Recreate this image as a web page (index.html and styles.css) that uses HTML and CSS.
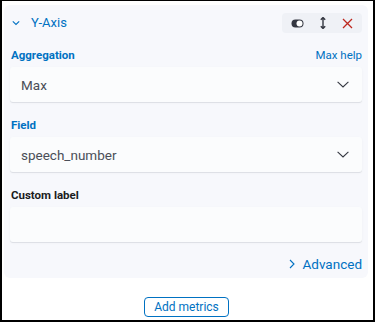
FILE: index.html
```html
<!DOCTYPE html>
<html>
<head>
<meta charset="utf-8">
<link rel="stylesheet" href="styles.css">
</head>
<body>
<div class="frame">
  <div class="panel">
    <div class="header">
      <div class="title">
        <svg class="chev-down" width="8" height="6" viewBox="0 0 8 6"><path d="M0.8 1.3 L4 4.5 L7.2 1.3" fill="none" stroke="#0071c2" stroke-width="1.1"/></svg>
        <span>Y-Axis</span>
      </div>
      <div class="actions">
        <svg width="13" height="9" viewBox="0 0 13 9"><rect x="0.5" y="0.5" width="12" height="8" rx="4" fill="#343741"/><circle cx="8.5" cy="4.5" r="3" fill="#fff"/></svg>
        <svg width="6" height="12" viewBox="0 0 6 12"><path d="M3 0.5 V11.5 M0.8 2.8 L3 0.5 L5.2 2.8 M0.8 9.2 L3 11.5 L5.2 9.2" fill="none" stroke="#343741" stroke-width="1.4"/></svg>
        <svg width="11" height="11" viewBox="0 0 11 11"><path d="M1 1 L10 10 M10 1 L1 10" fill="none" stroke="#bd271e" stroke-width="1.3"/></svg>
      </div>
    </div>

    <div class="row-label">
      <span class="label blue">Aggregation</span>
      <span class="help">Max help</span>
    </div>
    <div class="select">
      <span>Max</span>
      <svg width="12" height="7" viewBox="0 0 12 7"><path d="M0.6 0.8 L6 6 L11.4 0.8" fill="none" stroke="#343741" stroke-width="1.1"/></svg>
    </div>

    <div class="row-label">
      <span class="label blue">Field</span>
    </div>
    <div class="select">
      <span>speech_number</span>
      <svg width="12" height="7" viewBox="0 0 12 7"><path d="M0.6 0.8 L6 6 L11.4 0.8" fill="none" stroke="#343741" stroke-width="1.1"/></svg>
    </div>

    <div class="row-label">
      <span class="label dark">Custom label</span>
    </div>
    <div class="select input"></div>

    <div class="advanced">
      <svg width="6" height="10" viewBox="0 0 6 10"><path d="M1 1 L5 5 L1 9" fill="none" stroke="#0071c2" stroke-width="1.1"/></svg>
      <span>Advanced</span>
    </div>
  </div>

  <div class="footer">
    <button class="add">Add metrics</button>
  </div>
</div>
</body>
</html>
```

FILE: styles.css
```css
html, body {
  margin: 0;
  padding: 0;
  background: #fff;
}
body {
  font-family: Roboto, "Noto Sans", sans-serif;
  color: #343741;
}
.frame {
  box-sizing: border-box;
  width: 375px;
  height: 322px;
  border-style: solid;
  border-color: #000;
  border-width: 1px 2px 2px 2px;
  padding: 4px 5px 0 2px;
}
.panel {
  background: #f7f8fc;
  border-radius: 6px;
  padding: 8px 6px 6px 6px;
  display: flex;
  flex-direction: column;
}
.header {
  display: flex;
  justify-content: space-between;
  align-items: center;
  height: 20px;
}
.title {
  display: flex;
  align-items: center;
  gap: 11px;
  padding-left: 2px;
  color: #0071c2;
  font-size: 13px;
  line-height: 20px;
}
.actions {
  display: flex;
  align-items: center;
  gap: 16px;
  height: 20px;
  padding: 0 9px 0 9px;
  background: #eff1f6;
  border-radius: 4px;
}
.actions svg { display: block; }
.row-label {
  display: flex;
  justify-content: space-between;
  align-items: center;
  height: 16px;
  margin-top: 15px;
  margin-bottom: 4px;
  padding-left: 1px;
}
.header + .row-label { margin-top: 14px; }
.label {
  font-size: 11.5px;
  font-weight: 700;
  line-height: 16px;
}
.blue { color: #0071c2; }
.dark { color: #1a1c21; }
.help {
  font-size: 11.5px;
  color: #0071c2;
  line-height: 16px;
}
.select {
  height: 35px;
  background: #fbfcfd;
  border-radius: 3px;
  box-shadow: 0 1px 0 rgba(105,112,125,0.12), 0 1px 2px rgba(105,112,125,0.08);
  display: flex;
  align-items: center;
  justify-content: space-between;
  padding: 0 13px 0 11px;
  font-size: 13.5px;
  color: #4a4e57;
}
.select svg { display: block; }
.advanced {
  margin-top: 14px;
  height: 16px;
  display: flex;
  justify-content: flex-end;
  align-items: center;
  gap: 8px;
  color: #0071c2;
  font-size: 13.5px;
  line-height: 16px;
}
.footer {
  display: flex;
  justify-content: center;
  padding-top: 19px;
  padding-left: 1px;
}
.add {
  height: 20px;
  box-sizing: border-box;
  border: 1px solid #0071c2;
  border-radius: 4px;
  background: #fff;
  color: #0071c2;
  font-family: Roboto, "Noto Sans", sans-serif;
  font-size: 12px;
  line-height: 16px;
  padding: 0 9px;
}
```
